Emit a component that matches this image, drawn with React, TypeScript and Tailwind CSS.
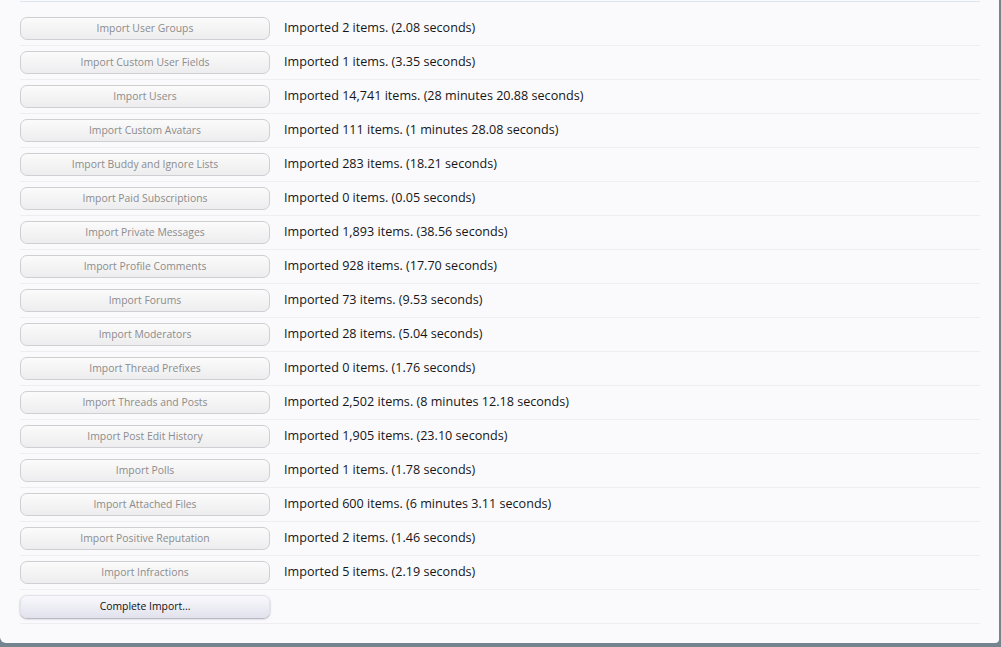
import React from 'react';

const steps: { label: string; result: string }[] = [
  { label: 'Import User Groups', result: 'Imported 2 items. (2.08 seconds)' },
  { label: 'Import Custom User Fields', result: 'Imported 1 items. (3.35 seconds)' },
  { label: 'Import Users', result: 'Imported 14,741 items. (28 minutes 20.88 seconds)' },
  { label: 'Import Custom Avatars', result: 'Imported 111 items. (1 minutes 28.08 seconds)' },
  { label: 'Import Buddy and Ignore Lists', result: 'Imported 283 items. (18.21 seconds)' },
  { label: 'Import Paid Subscriptions', result: 'Imported 0 items. (0.05 seconds)' },
  { label: 'Import Private Messages', result: 'Imported 1,893 items. (38.56 seconds)' },
  { label: 'Import Profile Comments', result: 'Imported 928 items. (17.70 seconds)' },
  { label: 'Import Forums', result: 'Imported 73 items. (9.53 seconds)' },
  { label: 'Import Moderators', result: 'Imported 28 items. (5.04 seconds)' },
  { label: 'Import Thread Prefixes', result: 'Imported 0 items. (1.76 seconds)' },
  { label: 'Import Threads and Posts', result: 'Imported 2,502 items. (8 minutes 12.18 seconds)' },
  { label: 'Import Post Edit History', result: 'Imported 1,905 items. (23.10 seconds)' },
  { label: 'Import Polls', result: 'Imported 1 items. (1.78 seconds)' },
  { label: 'Import Attached Files', result: 'Imported 600 items. (6 minutes 3.11 seconds)' },
  { label: 'Import Positive Reputation', result: 'Imported 2 items. (1.46 seconds)' },
  { label: 'Import Infractions', result: 'Imported 5 items. (2.19 seconds)' },
];

const font = { fontFamily: '"Open Sans", "Noto Sans", sans-serif' };

export default function App() {
  return (
    <div className="h-[647px] w-[1001px] bg-[#74858f]" style={font}>
      <div className="h-[643px] w-[999px] rounded-bl-[6px] rounded-br-[4px] bg-[#fafafd] pl-5 pr-[19px] pt-px">
        <div className="border-t border-[#d9e6f2] pt-[10px]">
          {steps.map((step) => (
            <div
              key={step.label}
              className="flex items-center gap-[14px] border-b border-[#eeeef2] py-[5px]"
            >
              <button className="h-[23px] w-[250px] rounded-[7px] border border-[#cfcfd2] bg-gradient-to-b from-[#fbfbfb] to-[#ededef] text-[10.4px] text-[#8c8c8c]">
                {step.label}
              </button>
              <span className="text-[12.6px] text-[#161616]">{step.result}</span>
            </div>
          ))}
          <div className="flex items-center border-b border-[#eeeef2] py-[5px]">
            <button className="h-[23px] w-[250px] rounded-[7px] border border-[#e2e2ea] bg-gradient-to-b from-[#f8f8fc] to-[#e3e3ee] text-[10.4px] text-[#111] shadow-[0_1px_2px_rgba(0,0,40,0.35)]">
              Complete Import...
            </button>
          </div>
        </div>
      </div>
    </div>
  );
}
